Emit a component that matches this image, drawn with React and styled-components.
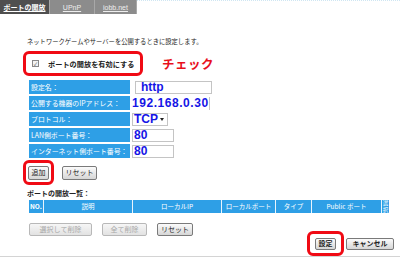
import React from "react";
import styled, { createGlobalStyle } from "styled-components";

const GlobalStyle = createGlobalStyle`
    body {
        margin: 0;
        background: #ffffff;
        font-family: "Noto Sans CJK JP", "Noto Sans", sans-serif;
    }
`;

const Page = styled.div`
    width: 400px;
    height: 257px;
    border-bottom: 1px solid #d4d4d4;
    border-top: 1px dotted #cfe6f2;
    box-sizing: border-box;
    display: flex;
    flex-direction: column;
`;

const TabBar = styled.div`
    display: flex;
    width: 137px;
    height: 16px;
    margin-top: -1px;
    background: #8c8c8c;
`;

const Tab = styled.div`
    width: ${(p) => p.width}px;
    display: flex;
    align-items: center;
    justify-content: center;
    font-size: 7px;
    font-weight: ${(p) => (p.active ? "bold" : "normal")};
    color: ${(p) => (p.active ? "#ffffff" : "#eeeeee")};
    text-decoration: underline;
    background: ${(p) => (p.active ? "#4f4f4f" : "transparent")};
    border-right: 1px solid #a8a8a8;
    box-sizing: border-box;
    font-family: ${(p) => (p.latin ? '"Liberation Sans", Arial, sans-serif' : "inherit")};
`;

const Intro = styled.div`
    margin: 24px 0 0 27px;
    font-size: 6.3px;
    line-height: 8px;
    color: #222;
    white-space: nowrap;
`;

const EnableLine = styled.div`
    display: flex;
    align-items: center;
    margin: 5px 0 0 23px;
`;

const RedMark = styled.div`
    display: flex;
    align-items: center;
    justify-content: ${(p) => (p.center ? "center" : "flex-start")};
    width: ${(p) => p.w}px;
    height: ${(p) => p.h}px;
    box-sizing: border-box;
    border: 3px solid #f00a14;
    border-radius: 6px;
    padding-left: ${(p) => p.pad || 0}px;
`;

const CheckBox = styled.span`
    width: 5px;
    height: 5px;
    border: 1px solid #888;
    background: #f4f4f4;
    font-size: 5px;
    line-height: 5px;
    color: #333;
    text-align: center;
    margin-right: 9px;
`;

const EnableText = styled.span`
    font-size: 7.2px;
    font-weight: bold;
    color: #222;
    white-space: nowrap;
`;

const CheckNote = styled.span`
    margin-left: 19px;
    font-size: 12.5px;
    font-weight: bold;
    color: #e8101c;
    letter-spacing: 0.5px;
`;

const FormGrid = styled.div`
    display: grid;
    grid-template-columns: 101px auto;
    grid-auto-rows: 14px;
    row-gap: 2px;
    column-gap: 2px;
    margin: 4px 0 0 29px;
`;

const LabelCell = styled.div`
    background: #2e9fe6;
    color: #ffffff;
    font-size: 6.9px;
    display: flex;
    align-items: center;
    padding-left: 2px;
    white-space: nowrap;
    overflow: hidden;
`;

const ValueCell = styled.div`
    display: flex;
    align-items: center;
`;

const ValueBox = styled.div`
    width: ${(p) => p.w}px;
    height: 13px;
    margin-left: ${(p) => p.offset || 0}px;
    box-sizing: border-box;
    border: ${(p) => (p.plain ? "none" : "1px solid #c4c4c4")};
    border-right: 1px solid #c4c4c4;
    display: flex;
    align-items: center;
    justify-content: space-between;
    padding: 0 3px 0 ${(p) => p.padLeft ?? 2}px;
    font-family: "Liberation Sans", Arial, sans-serif;
    font-weight: bold;
    font-size: 12px;
    letter-spacing: ${(p) => p.spacing || 0}px;
    color: #1515e6;
    overflow: hidden;
    white-space: nowrap;
`;

const Arrow = styled.span`
    width: 0;
    height: 0;
    border-left: 2.5px solid transparent;
    border-right: 2.5px solid transparent;
    border-top: 3px solid #222;
`;

const ButtonLine = styled.div`
    display: flex;
    align-items: center;
    gap: 8px;
    margin: 2px 0 0 23px;
`;

const Button = styled.button`
    height: ${(p) => p.h || 14}px;
    width: ${(p) => p.w}px;
    padding: 0;
    box-sizing: border-box;
    border: 1px solid ${(p) => (p.disabled ? "#b8b8b8" : "#7a7a7a")};
    border-radius: 2px;
    background: ${(p) => (p.disabled ? "linear-gradient(#f6f6f6, #e2e2e2)" : "linear-gradient(#fbfbfb, #d6d6d6)")};
    color: ${(p) => (p.disabled ? "#a8a8a8" : "#222")};
    font-family: "Noto Sans CJK JP", sans-serif;
    font-size: 7px;
    font-weight: ${(p) => (p.bold ? "bold" : "normal")};
    line-height: 1;
    display: flex;
    align-items: center;
    justify-content: center;
`;

const ListTitle = styled.div`
    margin: 3px 0 0 27px;
    font-size: 7px;
    font-weight: bold;
    line-height: 10px;
    color: #222;
`;

const HeadRow = styled.div`
    display: flex;
    height: 14px;
    width: 360px;
    margin: 2px 0 0 29px;
    background: #2e9fe6;
`;

const HeadCell = styled.div`
    width: ${(p) => p.w}px;
    flex-shrink: 0;
    border-right: ${(p) => (p.last ? "none" : "1px solid #e8f4fc")};
    box-sizing: border-box;
    display: flex;
    flex-direction: ${(p) => (p.vertical ? "column" : "row")};
    align-items: center;
    justify-content: center;
    color: #ffffff;
    font-size: ${(p) => (p.vertical ? 5.5 : 6.5)}px;
    font-weight: ${(p) => (p.bold ? "bold" : "normal")};
    line-height: ${(p) => (p.vertical ? "6.5px" : 1)};
    white-space: nowrap;
`;

const BottomArea = styled.div`
    display: flex;
    align-items: flex-start;
    margin-top: 10px;
`;

const ListButtons = styled.div`
    display: flex;
    gap: 10px;
    margin-left: 29px;
`;

const Footer = styled.div`
    display: flex;
    align-items: center;
    gap: 2px;
    margin: 8px 0 0 auto;
    padding-right: 6px;
`;

const App = () => {
    const rows = [
        { label: "設定名：", box: { w: 77, offset: 3, padLeft: 5 }, value: "http" },
        { label: "公開する機器のIPアドレス：", box: { w: 78, plain: true, padLeft: 0, spacing: 0.55 }, value: "192.168.0.30" },
        { label: "プロトコル：", box: { w: 36, padLeft: 1 }, value: "TCP", select: true },
        { label: "LAN側ポート番号：", box: { w: 42, padLeft: 1 }, value: "80" },
        { label: "インターネット側ポート番号：", box: { w: 42, padLeft: 1 }, value: "80" },
    ];

    const head = [
        { w: 15, text: "NO.", bold: true },
        { w: 89, text: "説明" },
        { w: 89, text: "ローカルIP" },
        { w: 54, text: "ローカルポート" },
        { w: 36, text: "タイプ" },
        { w: 70, text: "Public ポート" },
    ];

    return (
        <>
            <GlobalStyle />
            <Page>
                <TabBar>
                    <Tab width={50} active>ポートの開放</Tab>
                    <Tab width={45} latin>UPnP</Tab>
                    <Tab width={42} latin>iobb.net</Tab>
                </TabBar>

                <Intro>ネットワークゲームやサーバーを公開するときに設定します。</Intro>

                <EnableLine>
                    <RedMark w={120} h={25} pad={6}>
                        <CheckBox>✓</CheckBox>
                        <EnableText>ポートの開放を有効にする</EnableText>
                    </RedMark>
                    <CheckNote>チェック</CheckNote>
                </EnableLine>

                <FormGrid>
                    {rows.map((row) => (
                        <React.Fragment key={row.label}>
                            <LabelCell>{row.label}</LabelCell>
                            <ValueCell>
                                <ValueBox {...row.box}>
                                    {row.value}
                                    {row.select && <Arrow />}
                                </ValueBox>
                            </ValueCell>
                        </React.Fragment>
                    ))}
                </FormGrid>

                <ButtonLine>
                    <RedMark w={31} h={25} center>
                        <Button w={21}>追加</Button>
                    </RedMark>
                    <Button w={35}>リセット</Button>
                </ButtonLine>

                <ListTitle>ポートの開放一覧：</ListTitle>

                <HeadRow>
                    {head.map((cell) => (
                        <HeadCell key={cell.text} w={cell.w} bold={cell.bold}>
                            {cell.text}
                        </HeadCell>
                    ))}
                    <HeadCell w={7} vertical last>
                        <span>選</span>
                        <span>択</span>
                    </HeadCell>
                </HeadRow>

                <BottomArea>
                    <ListButtons>
                        <Button w={63} h={13} disabled>選択して削除</Button>
                        <Button w={45} h={13} disabled>全て削除</Button>
                        <Button w={36} h={13}>リセット</Button>
                    </ListButtons>
                    <Footer>
                        <RedMark w={37} h={25} center>
                            <Button w={21} h={12} bold>設定</Button>
                        </RedMark>
                        <Button w={48} h={12} bold>キャンセル</Button>
                    </Footer>
                </BottomArea>
            </Page>
        </>
    );
};

export default App;
